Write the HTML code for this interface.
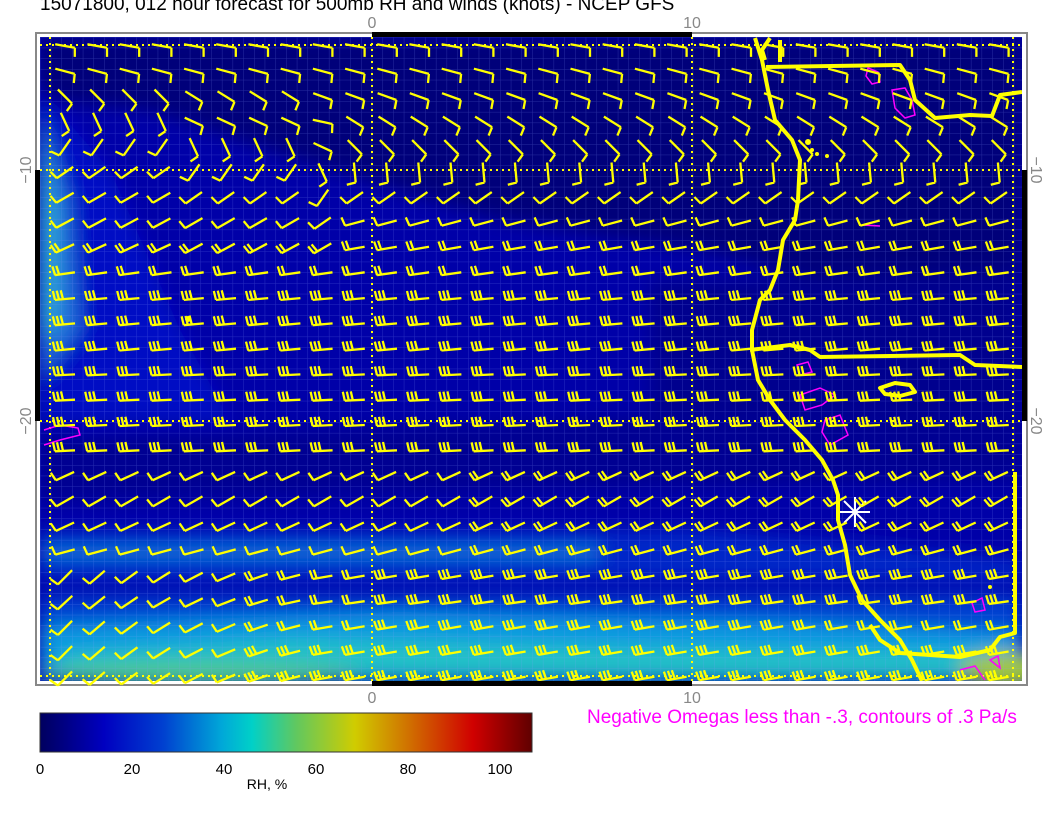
<!DOCTYPE html>
<html><head><meta charset="utf-8"><style>
html,body{margin:0;padding:0;background:#fff;width:1056px;height:816px;overflow:hidden;font-family:"Liberation Sans",sans-serif}
.t{position:absolute;white-space:nowrap}
</style></head><body>
<div class="t" style="left:40px;top:-6px;font-size:19px;color:#000">15071800, 012 hour forecast for 500mb RH and winds (knots) - NCEP GFS</div>
<svg width="1056" height="816" style="position:absolute;left:0;top:0">
<defs>
<filter id="bl" x="-20%" y="-20%" width="140%" height="140%"><feGaussianBlur stdDeviation="9"/></filter>
<clipPath id="cp"><rect x="40" y="37" width="982" height="644"/></clipPath>
<pattern id="gr" x="40" y="37" width="10.7" height="10.7" patternUnits="userSpaceOnUse"><path d="M0 0H10.7M0 0V10.7" stroke="#8c9cff" stroke-opacity="0.28" stroke-width="1" fill="none"/></pattern>
<linearGradient id="cb" x1="0" x2="1">
<stop offset="0" stop-color="#00005e"/><stop offset="0.13" stop-color="#0000c0"/><stop offset="0.25" stop-color="#0040d0"/><stop offset="0.37" stop-color="#00a8d8"/><stop offset="0.43" stop-color="#00d0c8"/><stop offset="0.52" stop-color="#60c860"/><stop offset="0.64" stop-color="#d0cc00"/><stop offset="0.75" stop-color="#d07000"/><stop offset="0.88" stop-color="#d00000"/><stop offset="1" stop-color="#600000"/></linearGradient>
</defs>
<rect x="36" y="33" width="991" height="652" fill="#fff" stroke="#888" stroke-width="2"/>
<g clip-path="url(#cp)">
<rect x="40" y="37" width="982" height="644" fill="#0000a8"/>
<g filter="url(#bl)">
<path d="M40 37H1022V330L900 300 700 250 500 220 300 160 150 110 40 100Z" fill="#00007a"/>
<path d="M650 280L1022 270V470L650 440Z" fill="#00008e"/>
<path d="M40 440L1022 400V480L40 500Z" fill="#000092"/>
<path d="M40 90L110 170 180 330 230 420 40 420Z" fill="#0010c4"/>
<path d="M40 110L70 200 80 330 40 380Z" fill="#2070d8"/>
<path d="M40 130L55 220 55 320 40 345Z" fill="#30b8d8"/>
<path d="M40 530H700L1022 560V580H40Z" fill="#0028c8"/>
<path d="M40 545H600V560H40Z" fill="#1070d8"/>
<path d="M40 595H1022V681H40Z" fill="#0040d0"/>
<path d="M40 625L400 612 800 622 1022 632V681H40Z" fill="#1098e0"/>
<path d="M60 652L300 638 700 648 1000 652 1022 681H60Z" fill="#20c0c8"/>
<ellipse cx="200" cy="674" rx="160" ry="12" fill="#50c890"/>
<ellipse cx="1005" cy="670" rx="45" ry="18" fill="#a0c840"/>
</g>
<rect x="40" y="37" width="982" height="644" fill="url(#gr)"/>
<g stroke="#ffff00" stroke-width="2" stroke-dasharray="2 4" fill="none">
<path d="M50 37V681M372 37V681M692 37V681M1013 37V681M40 45H1022M40 170H1022M40 421H1022M40 676H1022"/>
</g>
<g stroke="#ffff00" stroke-width="4" fill="none" stroke-linejoin="round">
<path d="M755 38L762 60 768 90 775 120 792 140 800 160 798 200 795 220 783 240 778 270 770 290 760 300 752 330 752 350 758 380 770 400 785 420 805 440 822 460 833 480 838 495 838 520 845 545 850 575 862 600 880 620 900 640 912 660 922 681"/>
<path d="M766 67L900 65 910 80 915 100 935 118 970 115 992 116 1000 95 1022 92"/>
<path d="M750 350L790 345 810 350 820 357 960 355 975 365 1022 367"/>
<path d="M1015 472V633L1000 637 990 650 960 657 900 653 880 640 870 625"/>
<path d="M880 388L895 383 910 385 915 392 900 396 885 394Z"/>
<path d="M770 38L762 50 765 60M780 40V62"/>
</g>
<g fill="#ffff00"><circle cx="808" cy="142" r="3"/><circle cx="812" cy="150" r="2"/><circle cx="817" cy="154" r="2"/><circle cx="827" cy="156" r="2"/><circle cx="188" cy="319" r="3"/><circle cx="990" cy="587" r="2"/></g>
<g stroke="#ff00ff" stroke-width="1.5" fill="none">
<path d="M868 68L878 72 880 82 872 84 866 76Z"/><path d="M892 90L905 88 912 100 915 115 905 118 895 108Z"/>
<path d="M44 430L60 425 78 428 80 435 60 440 44 445"/>
<path d="M797 365L808 362 812 372 800 375Z"/><path d="M800 395L820 388 835 395 822 405 805 410Z"/><path d="M825 420L840 415 848 435 830 445 822 432Z"/>
<path d="M862 225L880 226"/><path d="M972 603L982 598 985 610 975 612Z"/><path d="M990 660L998 656 1000 668Z"/><path d="M960 670L975 666 985 680"/>
</g>
<g stroke="#fff" stroke-width="2"><path d="M840 512H870M855 497V527M844 501L866 523M866 501L844 523"/></g>
</g>
<g id="barbs" stroke="#ffff00" stroke-width="2.3" fill="none" stroke-linecap="butt"></g>
<rect x="372" y="32" width="320" height="5" fill="#000"/>
<rect x="372" y="681" width="320" height="5" fill="#000"/>
<rect x="35" y="170" width="5" height="251" fill="#000"/>
<rect x="1022" y="170" width="5" height="251" fill="#000"/>
<g fill="#888" font-family="Liberation Sans" font-size="16">
<text x="372" y="28" text-anchor="middle">0</text><text x="692" y="28" text-anchor="middle">10</text>
<text x="372" y="703" text-anchor="middle">0</text><text x="692" y="703" text-anchor="middle">10</text>
<text transform="translate(31,170) rotate(-90)" text-anchor="middle">−10</text>
<text transform="translate(31,421) rotate(-90)" text-anchor="middle">−20</text>
<text transform="translate(1031,170) rotate(90)" text-anchor="middle">−10</text>
<text transform="translate(1031,421) rotate(90)" text-anchor="middle">−20</text>
</g>
<rect x="40" y="713" width="492" height="39" fill="url(#cb)" stroke="#333" stroke-width="1"/>
<g fill="#000" font-family="Liberation Sans" font-size="15" text-anchor="middle">
<text x="40" y="774">0</text><text x="132" y="774">20</text><text x="224" y="774">40</text><text x="316" y="774">60</text><text x="408" y="774">80</text><text x="500" y="774">100</text>
<text x="267" y="789" font-size="14">RH, %</text>
</g>
<text x="587" y="723" fill="#ff00ff" font-family="Liberation Sans" font-size="19">Negative Omegas less than -.3, contours of .3 Pa/s</text>
</svg>
<script>
(function(){
var g=document.getElementById('barbs'),s='';
var R=[190,195,200,212,225,265,325,345,350,352,355,355,355,357,357,357,357,335,330,335,345,350,352,350,350,350];
for(var r=0;r<26;r++){for(var c=0;c<31;c++){
 var cx=65+c*32.2, cy=46+r*25.3;
 if(cx>1010)continue;
 var rr=r;
 if(c<9&&r>=2&&r<9){rr=Math.max(0,r+Math.round((9-c)*0.25));}
 var a=R[Math.min(25,rr)];
 if(c<9&&r>=3&&r<9){a-=20;}
 if(r>=21&&c<8)a-=35*(1-c/8);
 var n=1;
 if(r>=8)n=2; if(r>=10)n=3; if(r>=13&&c>18)n=3;
 if(r>=17&&r<21)n=1+(c>12?1:0);
 if(r>=21)n=c<6?1:(c<10?2:3);
 if(r>=23&&c>23)n=2;
 if(r>=24)n=c<6?1:3;
 var rad=a*Math.PI/180,co=Math.cos(rad),si=Math.sin(rad);
 function P(x,y){return (cx+x*co-y*si).toFixed(1)+' '+(cy+x*si+y*co).toFixed(1);}
 var ox=-10;
 s+='M'+P(ox,0)+'L'+P(ox+20,0);
 for(var k=0;k<n;k++){var x=ox+k*4;s+='M'+P(x,0)+'L'+P(x-1.5,-9);}
}}
var p=document.createElementNS('http://www.w3.org/2000/svg','path');p.setAttribute('d',s);g.appendChild(p);
})();
</script>
</body></html>
